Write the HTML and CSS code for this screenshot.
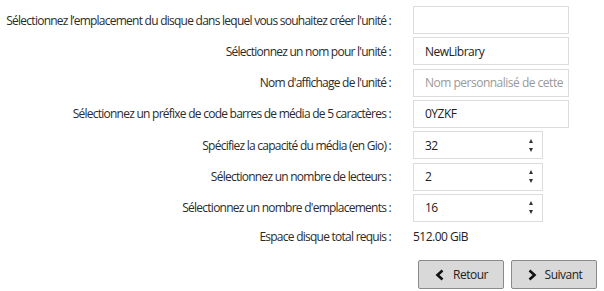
FILE: index.html
```html
<!DOCTYPE html>
<html lang="fr">
<head>
<meta charset="utf-8">
<link rel="stylesheet" href="styles.css">
</head>
<body>
<div class="form">
  <label class="lbl">Sélectionnez l’emplacement du disque dans lequel vous souhaitez créer l'unité :</label>
  <div class="field wide"></div>

  <label class="lbl">Sélectionnez un nom pour l'unité :</label>
  <div class="field wide">NewLibrary</div>

  <label class="lbl">Nom d'affichage de l'unité :</label>
  <div class="field wide placeholder">Nom personnalisé de cette</div>

  <label class="lbl">Sélectionnez un préfixe de code barres de média de 5 caractères :</label>
  <div class="field wide">0YZKF</div>

  <label class="lbl">Spécifiez la capacité du média (en Gio) :</label>
  <div class="field num"><span>32</span><span class="spin"><i class="up"></i><i class="down"></i></span></div>

  <label class="lbl">Sélectionnez un nombre de lecteurs :</label>
  <div class="field num"><span>2</span><span class="spin"><i class="up"></i><i class="down"></i></span></div>

  <label class="lbl">Sélectionnez un nombre d'emplacements :</label>
  <div class="field num"><span>16</span><span class="spin"><i class="up"></i><i class="down"></i></span></div>

  <label class="lbl total">Espace disque total requis :</label>
  <div class="value total">512.00 GiB</div>
</div>
<div class="actions">
  <button class="btn"><svg width="12" height="12" viewBox="0 0 12 12"><path d="M8.5 1.5 L3.5 6 L8.5 10.5" fill="none" stroke="#111" stroke-width="2.6"/></svg>Retour</button>
  <button class="btn"><svg width="12" height="12" viewBox="0 0 12 12"><path d="M3.5 1.5 L8.5 6 L3.5 10.5" fill="none" stroke="#111" stroke-width="2.6"/></svg>Suivant</button>
</div>
</body>
</html>
```
FILE: styles.css
```css
* { box-sizing: border-box; }
html, body { margin: 0; padding: 0; background: #fff; }
body {
  font-family: "Open Sans", "DejaVu Sans", sans-serif;
  font-size: 12px;
  letter-spacing: -0.75px;
  color: #2b2b2b;
  width: 604px;
  height: 291px;
  overflow: hidden;
}
.form {
  display: grid;
  grid-template-columns: 391px 156px;
  column-gap: 22px;
  row-gap: 3.33px;
  padding-top: 6px;
  align-items: center;
}
.lbl { text-align: right; white-space: nowrap; }
.field {
  height: 28px;
  border: 1px solid #dcdcdc;
  background: #fff;
  display: flex;
  align-items: center;
  padding: 0 11px;
  white-space: nowrap;
  overflow: hidden;
  color: #222;
  letter-spacing: -0.5px;
}
.field.placeholder { color: #999; }
.field.num { width: 130px; justify-content: space-between; padding-right: 9px; }
.spin { display: flex; flex-direction: column; gap: 5px; align-items: center; }
.spin i { display: block; width: 0; height: 0; border-left: 2.5px solid transparent; border-right: 2.5px solid transparent; }
.spin .up { border-bottom: 4px solid #333; }
.spin .down { border-top: 4px solid #333; }
.total { margin-top: 3px; }
.value { color: #222; letter-spacing: -0.5px; }
.actions {
  display: flex;
  justify-content: flex-end;
  gap: 7px;
  padding-right: 7px;
  margin-top: 15px;
}
.btn {
  width: 86px;
  height: 29px;
  background: #d9d9d9;
  border: 1px solid #8a8a8a;
  border-radius: 2px;
  font-family: inherit;
  font-size: 12px;
  letter-spacing: -0.5px;
  color: #222;
  display: flex;
  align-items: center;
  justify-content: center;
  gap: 7px;
  padding: 0;
}
```
